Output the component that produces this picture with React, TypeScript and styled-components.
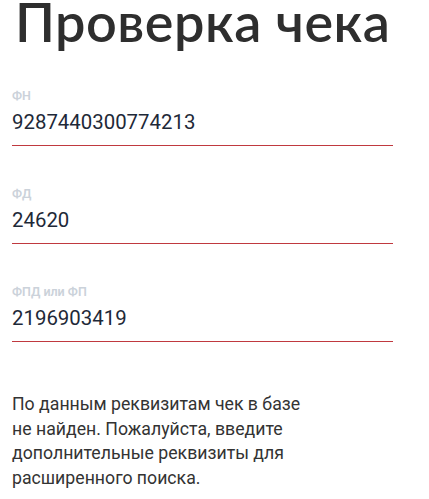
import styled, { createGlobalStyle } from "styled-components";

const GlobalStyle = createGlobalStyle`
  body {
    margin: 0;
    background: #ffffff;
    font-family: Roboto, "Liberation Sans", sans-serif;
  }
`;

const Page = styled.div`
  width: 381px;
  padding: 0 0 0 12px;
`;

const Title = styled.h1`
  margin: 0 0 0 3px;
  font-family: Lato, "Noto Sans", sans-serif;
  font-weight: 600;
  font-size: 54px;
  line-height: 44px;
  color: #2e2e2e;
  letter-spacing: 0.5px;
  white-space: nowrap;
`;

const Form = styled.div`
  display: flex;
  flex-direction: column;
  margin-top: 45px;
  gap: 41px;
`;

const Field = styled.div`
  display: flex;
  flex-direction: column;
  border-bottom: 1px solid #c0393f;
  padding-bottom: 11px;
`;

const Label = styled.label`
  font-size: 12.5px;
  font-weight: 600;
  line-height: 14px;
  color: #cbd2da;
`;

const Value = styled.div`
  margin-top: 7px;
  font-size: 20.4px;
  line-height: 24px;
  color: #1e2938;
`;

const Notice = styled.p`
  margin: 50px 0 0;
  width: 296px;
  font-size: 17.7px;
  line-height: 24.5px;
  color: #333333;
`;

interface FieldData {
  label: string;
  value: string;
}

const fields: FieldData[] = [
  { label: "ФН", value: "9287440300774213" },
  { label: "ФД", value: "24620" },
  { label: "ФПД или ФП", value: "2196903419" },
];

const App = () => {
  return (
    <>
      <GlobalStyle />
      <Page>
        <Title>Проверка чека</Title>
        <Form>
          {fields.map((f) => (
            <Field key={f.label}>
              <Label>{f.label}</Label>
              <Value>{f.value}</Value>
            </Field>
          ))}
        </Form>
        <Notice>
          По данным реквизитам чек в базе не найден. Пожалуйста, введите
          дополнительные реквизиты для расширенного поиска.
        </Notice>
      </Page>
    </>
  );
};

export default App;
